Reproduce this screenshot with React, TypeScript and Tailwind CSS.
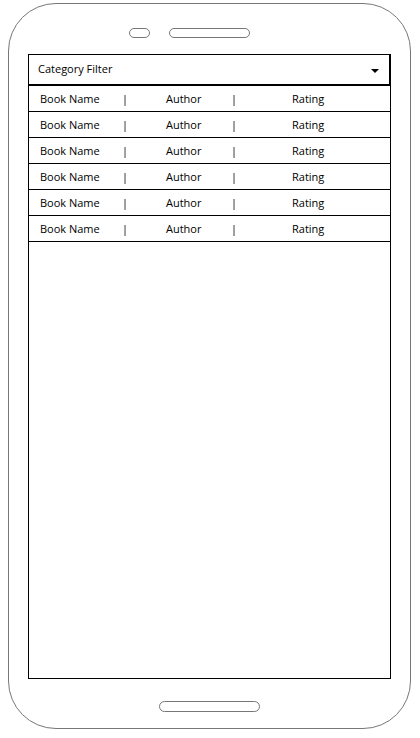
import React from "react";

const rows = Array.from({ length: 6 });

function BookRow() {
  return (
    <div className="flex h-[26px] items-center border-b border-black pt-[1px] text-[11px] text-black">
      <span className="w-[93px] shrink-0 pl-[11px]">Book Name</span>
      <span className="w-[3px] shrink-0 text-black will-change-transform">|</span>
      <span className="w-[106px] shrink-0 pl-[41px]">Author</span>
      <span className="w-[3px] shrink-0 text-black will-change-transform">|</span>
      <span className="pl-[58px]">Rating</span>
    </div>
  );
}

export default function App() {
  return (
    <div
      className="h-[738px] w-[420px] bg-white pl-[8px] pt-[3px] antialiased"
      style={{ fontFamily: '"Open Sans", "Noto Sans", sans-serif' }}
    >
      <div className="flex h-[726px] w-[403px] flex-col rounded-[48px] border border-[#777] pt-[24px]">
        {/* speaker + camera */}
        <div className="flex h-[10px]">
          <div className="ml-[120px] h-[10px] w-[21px] rounded-full border border-[#777]" />
          <div className="ml-[19px] h-[10px] w-[81px] rounded-full border border-[#777]" />
        </div>

        {/* screen */}
        <div className="ml-[19px] mt-[16px] flex h-[625px] w-[363px] flex-col border border-black">
          <div className="flex h-[31px] w-[361px] shrink-0 items-center justify-between border-b-2 border-r border-black pl-[9px] pr-[10px] text-[11px] text-black">
            <span>Category Filter</span>
            <svg width="8" height="4" viewBox="0 0 8 4" className="mt-[3px]">
              <path d="M0 0 L8 0 L4 4 Z" fill="#000" />
            </svg>
          </div>
          {rows.map((_, i) => (
            <BookRow key={i} />
          ))}
        </div>

        <div className="mt-[22px] ml-[150px] h-[11px] w-[101px] rounded-full border border-[#777]" />
      </div>
    </div>
  );
}
